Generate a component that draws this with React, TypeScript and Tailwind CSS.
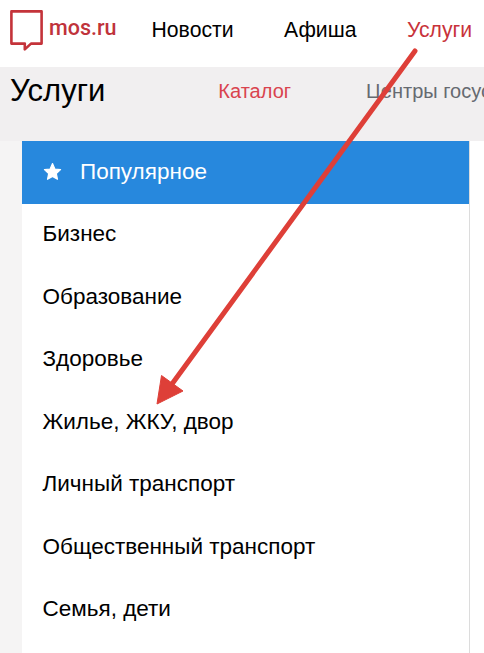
const items = ["Бизнес", "Образование", "Здоровье", "Жилье, ЖКУ, двор", "Личный транспорт", "Общественный транспорт", "Семья, дети"];

export default function App() {
  return (
    <div className="relative flex h-[653px] w-[484px] flex-col overflow-hidden bg-white font-['Liberation_Sans',Arial,sans-serif] text-black">
      <header className="flex h-[67px] shrink-0 items-center">
        <div className="ml-[10px] flex items-start self-start pt-[9.5px]">
          <svg width="33" height="42" viewBox="0 0 33 42">
            <path d="M1.4 1.4H31.6V33.6H21L14.8 39.4V33.6H1.4Z" fill="none" stroke="#c4333a" strokeWidth="2.6" strokeLinejoin="round" />
          </svg>
          <span className="ml-[6px] mt-[6px] font-['Roboto',sans-serif] text-[21.5px] font-medium leading-[24px] text-[#c0333b]">mos.ru</span>
        </div>
        <nav className="mb-[8px] ml-[35px] flex gap-[50.5px] text-[21.2px] leading-[24px]">
          <span>Новости</span>
          <span>Афиша</span>
          <span className="text-[#c8323a]">Услуги</span>
        </nav>
      </header>
      <div className="flex h-[74px] shrink-0 items-start overflow-hidden whitespace-nowrap bg-[#f1eff0]">
        <h1 className="ml-[10px] mt-[7px] text-[31px] leading-[34px]">Услуги</h1>
        <span className="ml-[113px] mt-[12px] text-[20px] leading-[24px] text-[#d9434e]">Каталог</span>
        <span className="ml-[75px] mt-[12px] text-[20px] leading-[24px] text-[#666a70]">Центры госуслуг</span>
      </div>
      <div className="flex flex-1">
        <div className="w-[22px] bg-[#f5f4f4]" />
        <div className="w-[448px] border-r border-[#dcdcdc]">
          <div className="flex h-[63px] items-center bg-[#2788dd] pb-[2px] pl-[21px] text-white">
            <svg width="19" height="19" viewBox="0 0 24 24" fill="white" stroke="white" strokeWidth="1.5" strokeLinejoin="round"><path d="M12 2l3 6.8 7.2.8-5.4 4.9 1.5 7.3L12 18.2l-6.3 3.6 1.5-7.3-5.4-4.9 7.2-.8z" /></svg>
            <span className="ml-[18px] text-[22.5px] leading-[26px]">Популярное</span>
          </div>
          <ul className="text-[22.5px] leading-[26px]">
            {items.map((item) => (
              <li key={item} className="flex h-[62.5px] items-center pb-[2px] pl-[20.5px]">{item}</li>
            ))}
          </ul>
        </div>
      </div>
      <svg className="pointer-events-none absolute left-0 top-0" width="484" height="653" viewBox="0 0 484 653">
        <line x1="415" y1="51" x2="172" y2="384" stroke="#de3f38" strokeWidth="5" strokeLinecap="round" />
        <path d="M157 404L161.500 375.500L183 391Z" fill="#de3f38" stroke="#de3f38" strokeWidth="1" strokeLinejoin="round" />
      </svg>
    </div>
  );
}
